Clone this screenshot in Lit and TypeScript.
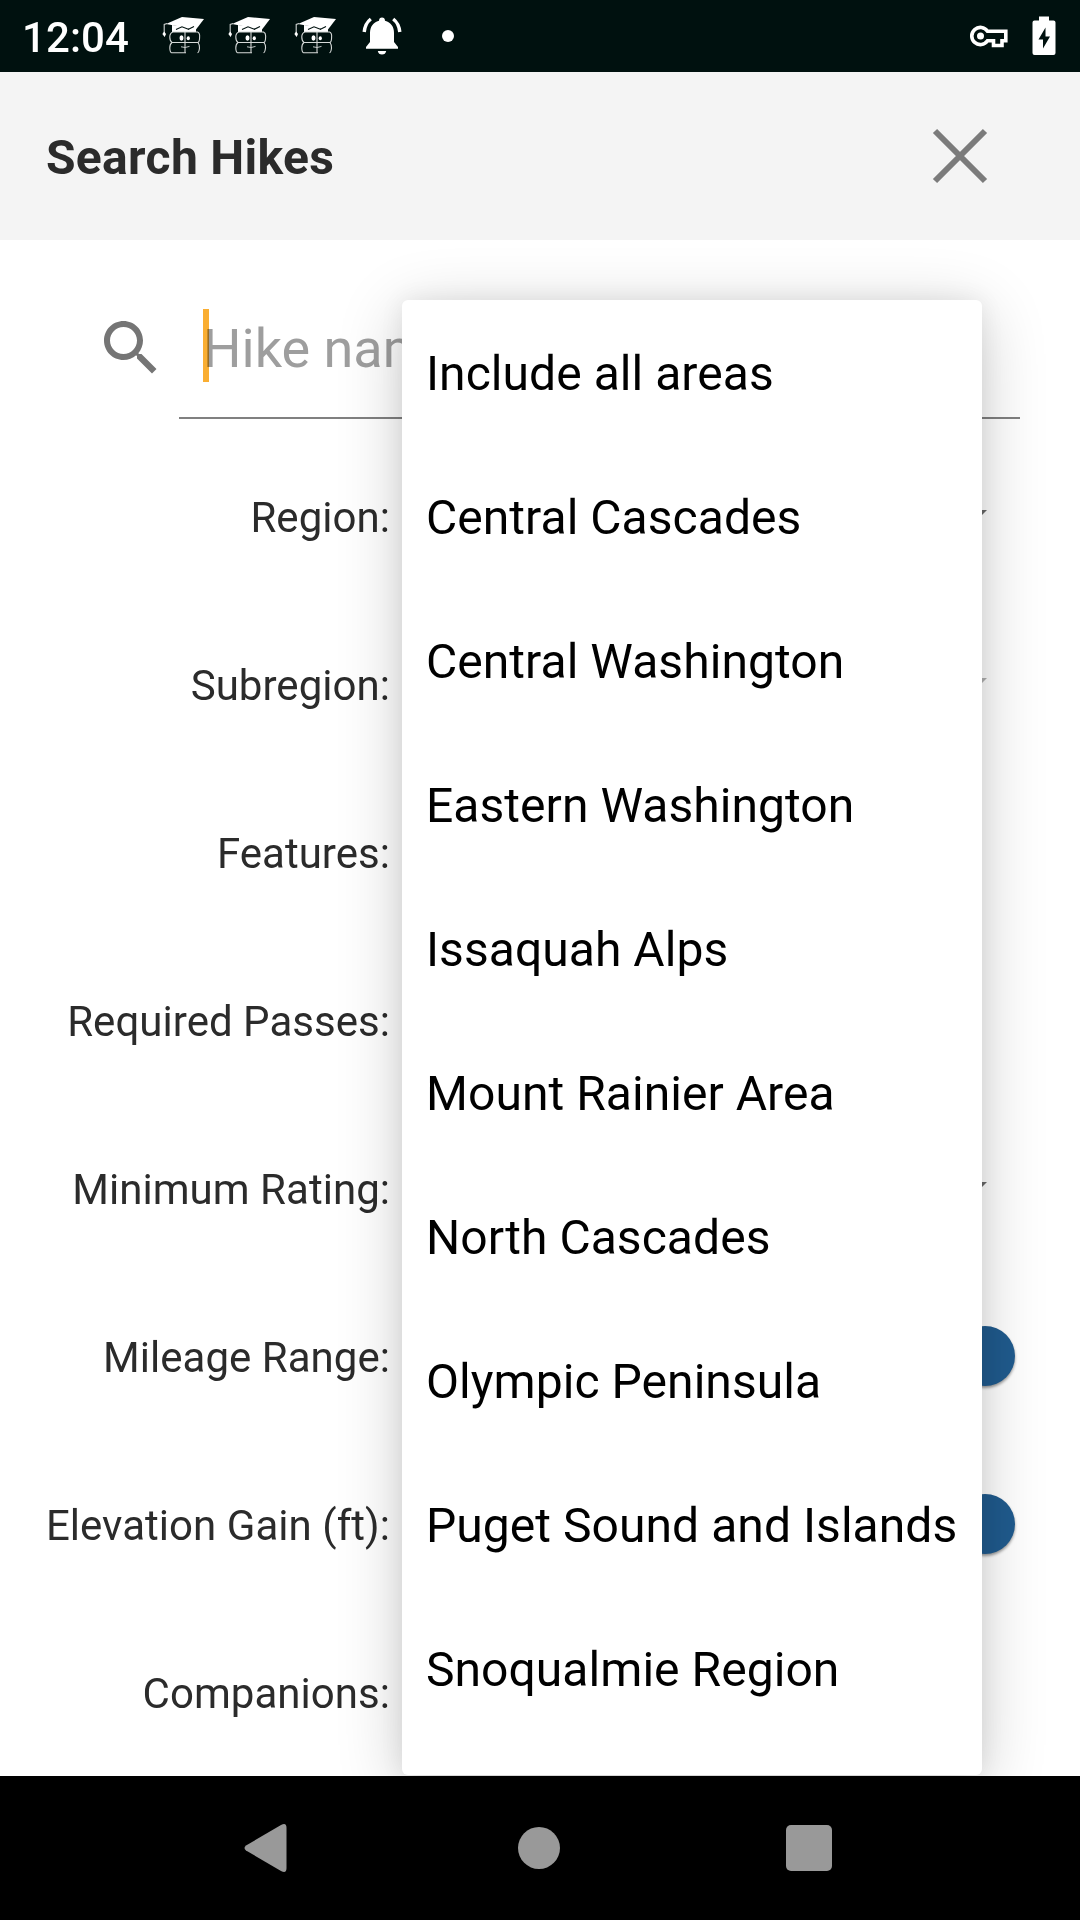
import { LitElement, html, css } from "lit";
import { customElement } from "lit/decorators.js";

const AREAS = [
  "Include all areas",
  "Central Cascades",
  "Central Washington",
  "Eastern Washington",
  "Issaquah Alps",
  "Mount Rainier Area",
  "North Cascades",
  "Olympic Peninsula",
  "Puget Sound and Islands",
  "Snoqualmie Region",
];

type Control = "select" | "select-disabled" | "range" | "none";

const FILTERS: { label: string; control: Control }[] = [
  { label: "Region:", control: "select" },
  { label: "Subregion:", control: "select-disabled" },
  { label: "Features:", control: "none" },
  { label: "Required Passes:", control: "none" },
  { label: "Minimum Rating:", control: "select" },
  { label: "Mileage Range:", control: "range" },
  { label: "Elevation Gain (ft):", control: "range" },
  { label: "Companions:", control: "none" },
];

const graduate = html`<svg class="grad" viewBox="0 0 44 40" width="44" height="40">
  <path d="M4 8 L20 1 L42 3 L34 13.500 Z" fill="#fff"/>
  <path d="M10 9 L34 12 L34 16 L10 16 Z" fill="#fff"/>
  <path d="M14 13.500 L20 10.800 L27 13.400 M26 13.400 L32 10.600" stroke="#00110f" stroke-width="1.100" fill="none"/>
  <path d="M5 7.500 L2.200 8.500 V17" stroke="#cfd4d3" stroke-width="1.100" fill="none"/>
  <path d="M2.200 15.500 L4 18 L2.600 21 L0.400 18 Z" fill="#fff"/>
  <g fill="none" stroke="#d5d9d8" stroke-width="1.100">
    <path d="M11 16 H35.500 Q38 17 37.600 21 Q37.600 25.600 36 26.500 H10 Q7.800 25 7.800 21 Q7.800 17 11 16 Z"/>
    <path d="M10 26.500 Q7.800 28 7.800 32 Q8 36.500 9.500 36.700 H24 M36 26.500 Q37.800 29 37.500 32 Q37 36.500 35.500 36.800"/>
    <path d="M23 16 V36.800"/>
    <path d="M19 30.800 Q23 32.400 27.500 30.400" stroke-width="0.900"/>
  </g>
  <ellipse cx="19.500" cy="22" rx="2" ry="2.700" fill="#fff"/>
  <ellipse cx="26.300" cy="22.300" rx="1.600" ry="2" fill="#fff"/>
</svg>`;

@customElement("status-bar")
export class StatusBar extends LitElement {
  static styles = css`
    :host {
      display: flex;
      align-items: center;
      height: 72px;
      box-sizing: border-box;
      padding: 0 24px 0 22px;
      background: #00110f;
      color: #fff;
      font: 500 42px/70px Roboto, sans-serif;
    }
    svg { display: block; flex: none; }
    .clock { width: 140px; letter-spacing: 0.1px; padding-top: 4px; box-sizing: border-box; }
    .notes { display: flex; align-items: center; gap: 22px; flex: 1; }
    .bell { margin-left: 2px; }
    .dot { width: 12px; height: 12px; border-radius: 50%; background: #fff; margin-left: 18px; }
    .system { display: flex; align-items: center; gap: 23px; }
  `;
  render() {
    return html`
      <div class="clock">12:04</div>
      <div class="notes">
        ${graduate}${graduate}${graduate}
        <svg class="bell" viewBox="0 0 40 38" width="40" height="38">
          <path d="M20 0.500 Q22.800 0.500 23 3.800 C29 5.300 32 10 32 16 V25 L36 30 V31.700 H4 V30 L8 25 V16 C8 10 11 5.300 17 3.800 Q17.200 0.500 20 0.500 Z M15.800 34 H24.200 Q23.500 37.600 20 37.600 Q16.500 37.600 15.800 34 Z" fill="#fff"/>
          <path d="M8.800 2 Q3 6.500 2.200 15 M31.200 2 Q37 6.500 37.800 15" stroke="#fff" stroke-width="3.400" fill="none"/>
        </svg>
        <div class="dot"></div>
      </div>
      <div class="system">
        <svg viewBox="0 0 40 24" width="40" height="24">
          <path d="M18.500 7.200 A8.600 8.600 0 1 0 18.500 16.800 H24.500 V21.500 H33 V16.800 H36.800 V7.200 Z" fill="none" stroke="#fff" stroke-width="3.600"/>
          <circle cx="11.500" cy="12" r="3.500" fill="#fff"/>
        </svg>
        <svg viewBox="0 0 24 40" width="24" height="40">
          <path d="M7 0.500 H17 V4.500 H21.500 Q23.500 4.500 23.500 6.500 V37 Q23.500 39 21.500 39 H2.500 Q0.500 39 0.500 37 V6.500 Q0.500 4.500 2.500 4.500 H7 Z" fill="#fff"/>
          <path d="M13.500 11.500 L6.500 23.500 H11 V32.500 L18 20.500 H13.500 Z" fill="#00110f"/>
        </svg>
      </div>`;
  }
}

@customElement("app-root")
export class AppRoot extends LitElement {
  static styles = css`
    :host {
      display: flex;
      flex-direction: column;
      position: relative;
      width: 1080px;
      height: 1920px;
      overflow: hidden;
      background: #fff;
      font-family: Roboto, sans-serif;
      color: #2b2b2b;
    }
    svg { display: block; flex: none; }
    .header {
      display: flex;
      align-items: center;
      justify-content: space-between;
      height: 168px;
      box-sizing: border-box;
      padding: 0 92px 0 46px;
      background: #f4f4f4;
    }
    .title { font-size: 48px; line-height: 56px; font-weight: 700; padding-top: 3px; letter-spacing: 0.32px; }
    .content {
      position: relative;
      flex: 1;
      overflow: hidden;
    }
    .search {
      display: flex;
      height: 194px;
      box-sizing: border-box;
      padding: 52px 60px 0 95px;
    }
    .glass { margin-top: 20px; margin-right: 12px; }
    .field {
      flex: 1;
      height: 127px;
      box-sizing: border-box;
      border-bottom: 2px solid #808080;
      padding: 17px 0 0 24px;
      display: flex;
    }
    .caret { width: 6px; height: 73px; background: #faae32; }
    .hint { font-size: 54px; line-height: 73px; color: #9e9e9e; margin-left: -6px; mix-blend-mode: multiply; padding-top: 3px; }
    .row {
      display: grid;
      grid-template-columns: 390px 1fr;
      height: 168px;
      align-items: center;
    }
    .label { text-align: right; font-size: 42px; line-height: 50px; white-space: nowrap; letter-spacing: 0.04px; }
    .control { display: flex; justify-content: flex-end; }
    .arrow { margin: 0 93px 1px 0; color: #696969; }
    .arrow.off { color: #b0b0b0; }
    .thumb {
      width: 60px;
      height: 60px;
      margin: 0 65px 4px 0;
      border-radius: 50%;
      background: #205b8e;
      box-shadow: 0 2px 3px rgba(0, 0, 0, 0.4);
    }
    .menu {
      position: absolute;
      left: 402px;
      top: 60px;
      width: 580px;
      height: 1475px;
      border-radius: 6px;
      background: #fff;
      box-shadow: 0 12px 66px rgba(0, 0, 0, 0.2), 0 0 24px rgba(0, 0, 0, 0.07);
    }
    .item {
      height: 144px;
      line-height: 144px;
      padding: 2px 0 0 24px;
      box-sizing: border-box;
      font-size: 48px;
      color: #000;
      white-space: nowrap;
      letter-spacing: 0.05px;
    }
    .nav {
      display: flex;
      align-items: center;
      justify-content: space-between;
      height: 144px;
      box-sizing: border-box;
      padding: 0 248px 0 244px;
      background: #000;
    }
    .home { margin-left: 4px; }
  `;

  private control(kind: Control) {
    if (kind === "range") return html`<div class="thumb"></div>`;
    if (kind === "none") return null;
    return html`<svg class="arrow ${kind === "select" ? "" : "off"}" viewBox="0 0 30 15" width="30" height="15">
      <path d="M0 0 H30 L15 15 Z" fill="currentColor"/>
    </svg>`;
  }

  render() {
    return html`
      <status-bar></status-bar>
      <div class="header">
        <div class="title">Search Hikes</div>
        <svg class="close" viewBox="0 0 56 56" width="56" height="56">
          <path d="M3 3 L53 53 M53 3 L3 53" stroke="#7b7b7b" stroke-width="6" fill="none"/>
        </svg>
      </div>
      <div class="content">
        <div class="search">
          <svg class="glass" viewBox="0 0 24 24" width="72" height="72">
            <path fill="#757575" d="M15.500 14h-.790l-.280-.270C15.410 12.590 16 11.110 16 9.500 16 5.910 13.090 3 9.500 3S3 5.910 3 9.500 5.910 16 9.500 16c1.610 0 3.090-.590 4.230-1.570l.270.280v.790l5 4.990L20.490 19l-4.990-5zm-6 0C7.010 14 5 11.990 5 9.500S7.010 5 9.500 5 14 7.010 14 9.500 11.990 14 9.500 14z"/>
          </svg>
          <div class="field"><div class="caret"></div><div class="hint">Hike name</div></div>
        </div>
        ${FILTERS.map(
          (f) => html`<div class="row">
            <div class="label">${f.label}</div>
            <div class="control">${this.control(f.control)}</div>
          </div>`
        )}
        <div class="menu">${AREAS.map((a) => html`<div class="item">${a}</div>`)}</div>
      </div>
      <div class="nav">
        <svg viewBox="0 0 43 48" width="43" height="48">
          <path d="M37 1 Q42.500 -2 42.500 4 V44 Q42.500 50 37 47 L2 26.500 Q-1 24 2 21.500 Z" fill="#999"/>
        </svg>
        <svg class="home" viewBox="0 0 42 42" width="42" height="42"><circle cx="21" cy="21" r="21" fill="#999"/></svg>
        <svg viewBox="0 0 46 46" width="46" height="46"><rect width="46" height="46" rx="5" fill="#999"/></svg>
      </div>`;
  }
}
